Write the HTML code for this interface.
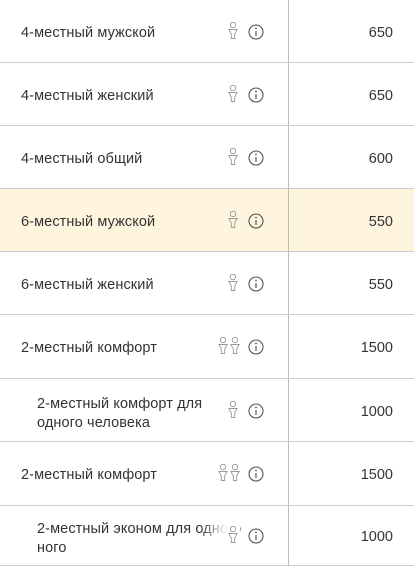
<!DOCTYPE html>
<html><head><meta charset="utf-8"><style>
body{margin:0;width:414px;height:562px;overflow:hidden;background:#fff;font-family:"Liberation Sans",sans-serif;color:#333}
.row{position:absolute;left:0;width:414px;border-bottom:1px solid #ccc;}
.row .l{position:absolute;left:0;top:0;bottom:0;width:288px;border-right:1px solid #bbb}
.t{position:absolute;font-size:14.5px;line-height:19px;white-space:nowrap;letter-spacing:.1px}
.fade{position:absolute;left:200px;width:40px;top:0;bottom:0;background:linear-gradient(90deg,rgba(255,255,255,0),#fff 70%)}
.n{position:absolute;right:21px;font-size:14.5px}
svg{position:absolute}
.hl{background:#fff5df}
.hl .fade{background:linear-gradient(90deg,rgba(255,245,223,0),#fff5df 70%)}
</style></head><body>
<div id="c"></div>
<script>
const rows=[
[0,63,"4-местный мужской",null,1,"650"],
[63,63,"4-местный женский",null,1,"650"],
[126,63,"4-местный общий",null,1,"600"],
[189,63,"6-местный мужской",null,1,"550",1],
[252,63,"6-местный женский",null,1,"550"],
[315,64,"2-местный комфорт",null,2,"1500"],
[379,63,"2-местный комфорт для","одного человека",1,"1000"],
[442,64,"2-местный комфорт",null,2,"1500"],
[506,60,"2-местный эконом для одного","ного",1,"1000"]];
const person=x=>`<circle cx="${x+5}" cy="3" r="2.7" fill="none" stroke="#999" stroke-width="0.9"/><path d="M${x+0.8} 7.5h8.4l-2.5 4.5v4.5h-3.4v-4.5z" fill="none" stroke="#999" stroke-width="0.9"/>`;
let h="";
rows.forEach(r=>{
 const [y,ht,a,b,p,n,hl]=r;
 const cy=Math.round(ht/2);
 let txt, left=b?37:21;
 if(b) txt=`<div class="t" style="left:${left}px;top:${cy-16}px">${a}<br>${b}</div>`;
 else txt=`<div class="t" style="left:${left}px;top:${cy-8}px">${a}</div>`;
 let ic="";
 const px=p==2?218:228;
 for(let i=0;i<p;i++) ic+=person(px+i*12);
 h+=`<div class="row${hl?' hl':''}" style="top:${y}px;height:${ht-1}px"><div class="l"></div>${txt}<div class="fade"></div>
 <svg style="left:0;top:${cy-10}px" width="290" height="20">${ic}<circle cx="256" cy="10" r="7" fill="none" stroke="#555" stroke-width="1.1"/><circle cx="256" cy="6.5" r="0.9" fill="#555"/><path d="M256 9v5" stroke="#555" stroke-width="1.2"/></svg>
 <div class="n" style="top:${cy-7}px">${n}</div></div>`;
});
document.getElementById("c").innerHTML=h;
</script>
</body></html>
